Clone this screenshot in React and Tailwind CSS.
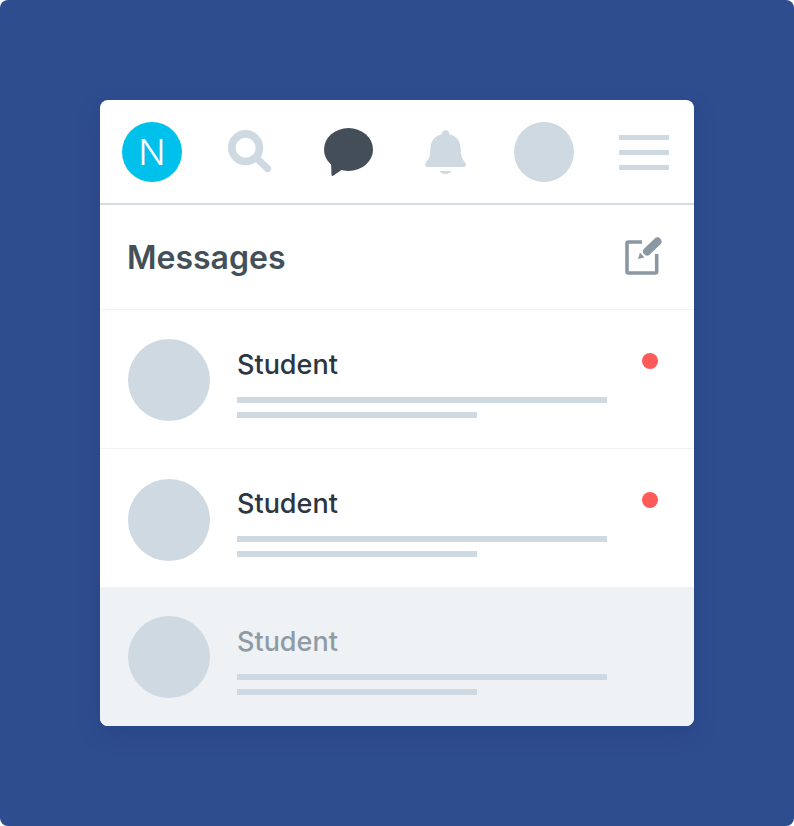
function Lines({ className = "" }) {
  return (
    <div className={`flex flex-col gap-[9px] ${className}`}>
      <div className="h-[6px] w-[370px] bg-[#cfd9e2]" />
      <div className="h-[6px] w-[240px] bg-[#cfd9e2]" />
    </div>
  );
}

function Row({ unread, muted, height, topPad, textTop, dotTop }) {
  return (
    <div className={`flex pl-[28px] ${height} ${topPad} ${muted ? "bg-[#eff2f5]" : "bg-white border-b border-[#f0f3f5]"}`}>
      <div className="w-[82px] h-[82px] rounded-full bg-[#cfd9e2] shrink-0" />
      <div className="ml-[27px] w-[370px]">
        <div className={`text-[27px] leading-[36px] font-medium ${textTop} ${muted ? "text-[#8f9ba5]" : "text-[#2c3640]"}`}>Student</div>
        <Lines className="mt-[15px]" />
      </div>
      {unread && <div className={`ml-[35px] w-[16px] h-[16px] rounded-full bg-[#ff5a5a] ${dotTop}`} />}
    </div>
  );
}

export default function App() {
  return (
    <div className="w-[794px] h-[826px] bg-[#2e4d8f] rounded-[8px] pt-[100px] pl-[100px]" style={{ fontFamily: '"Inter", "Open Sans", sans-serif' }}>
      <div className="w-[594px] h-[626px] bg-white rounded-[8px] overflow-hidden shadow-[0_8px_24px_rgba(20,40,90,0.18)]">
        <div className="h-[105px] border-b-2 border-[#d3dce5] flex items-start pl-[22px] pt-[22px]">
          <div className="w-[60px] h-[60px] rounded-full bg-[#00c1eb] flex items-center justify-center text-white text-[36px] font-light leading-none">N</div>
          <svg className="ml-[46px] mt-[8px]" width="44" height="44" viewBox="0 0 44 44">
            <circle cx="17.6" cy="17.7" r="13.8" fill="none" stroke="#cfd9e2" strokeWidth="7.6" />
            <path d="M29 28.5L39.6 38.6" stroke="#cfd9e2" strokeWidth="7" strokeLinecap="round" />
          </svg>
          <svg className="ml-[52px] mt-[6px]" width="50" height="50" viewBox="0 0 50 50">
            <ellipse cx="24.5" cy="21.5" rx="24.5" ry="21.5" fill="#434e58" />
            <path d="M7 33L7.5 47Q8 48.5 9.5 47.5L19 41Z" fill="#434e58" />
          </svg>
          <svg className="ml-[50px] mt-[8px]" width="44" height="44" viewBox="0 0 44 44">
            <circle cx="21.5" cy="4" r="3.8" fill="#cfd9e2" />
            <path d="M21.5 4C12 4 7 10 6.5 17L6 24C5.5 28 3.5 30.5 1.5 33C.5 35 1.5 37 3.5 37H39.5C41.5 37 42.5 35 41.5 33C39.5 30.5 37.5 28 37 24L36.5 17C36 10 31 4 21.5 4Z" fill="#cfd9e2" />
            <path d="M15.5 41H27.5C26.5 43 24 44 21.5 44C19 44 16.5 43 15.5 41Z" fill="#cfd9e2" />
          </svg>
          <div className="ml-[46px] w-[60px] h-[60px] rounded-full bg-[#cfd9e2]" />
          <div className="ml-[45px] mt-[13px] w-[50px] flex flex-col gap-[10px]">
            <div className="h-[5px] bg-[#cfd9e2]" />
            <div className="h-[5px] bg-[#cfd9e2]" />
            <div className="h-[5px] bg-[#cfd9e2]" />
          </div>
        </div>
        <div className="h-[105px] border-b border-[#f0f3f5] flex items-center justify-between pl-[27px] pr-[30px]">
          <div className="text-[32px] font-semibold text-[#43505a] leading-none mt-[1px]">Messages</div>
          <svg className="-mt-[1px]" width="40" height="40" viewBox="0 0 40 40">
            <path d="M18 5H4.5Q3 5 3 6.5V34.5Q3 36 4.5 36H31.2Q32.7 36 32.7 34.5V17" fill="none" stroke="#8b98a3" strokeWidth="3.6" />
            <path d="M23 14.5L33.5 4.5" stroke="#8b98a3" strokeWidth="8" strokeLinecap="round" />
            <path d="M14 22L16 15.5L20.5 20.5Z" fill="#8b98a3" />
          </svg>
        </div>
        <Row unread height="h-[139px]" topPad="pt-[29px]" textTop="mt-[8px] -mb-[1px]" dotTop="mt-[14px]" />
        <Row unread height="h-[139px]" topPad="pt-[30px]" textTop="mt-[7px] -mb-[1px]" dotTop="mt-[13px]" />
        <Row muted height="h-[138px]" topPad="pt-[28px]" textTop="mt-[8px] -mb-[1px]" />
      </div>
    </div>
  );
}
